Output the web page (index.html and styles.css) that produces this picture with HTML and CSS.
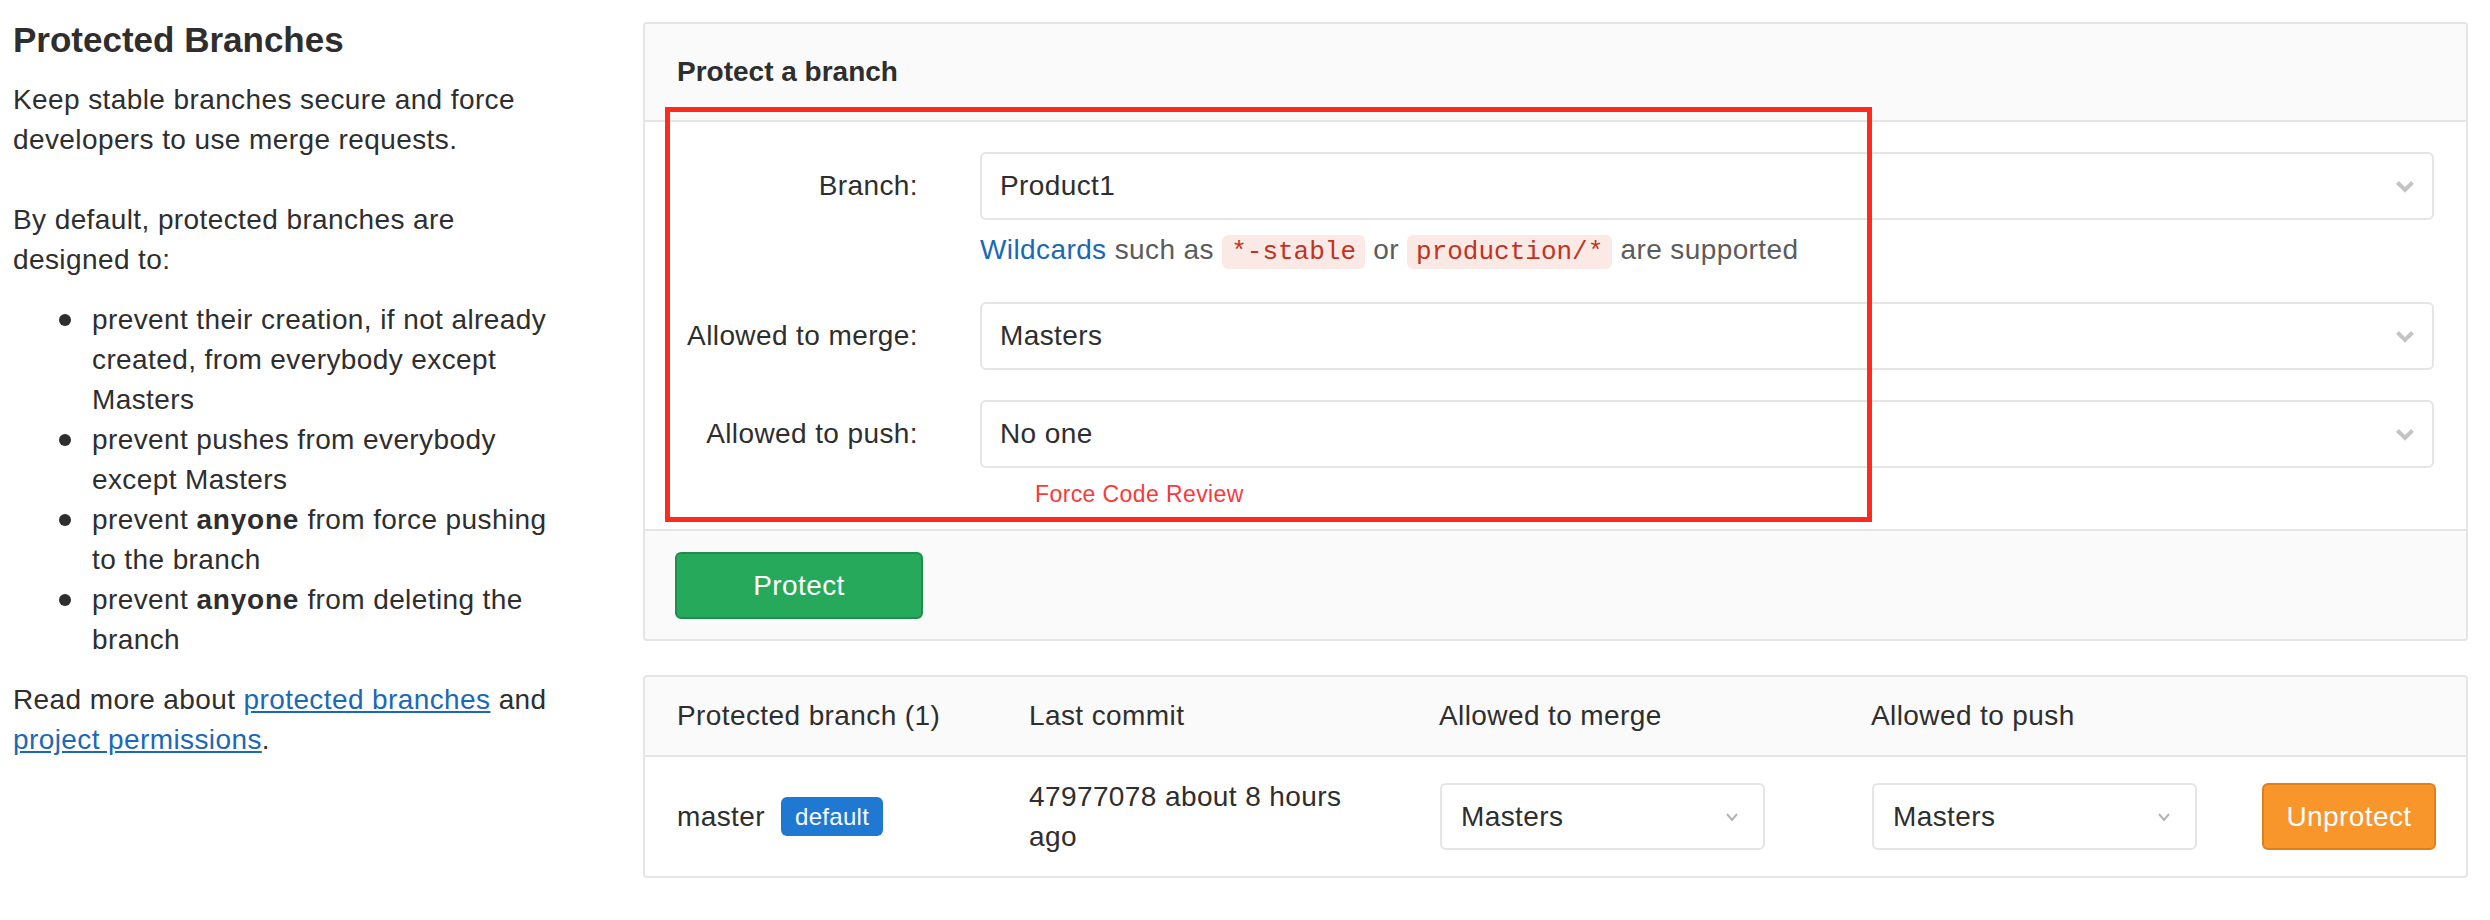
FILE: index.html
```html
<!DOCTYPE html>
<html lang="en">
<head>
<meta charset="utf-8">
<title>Protected Branches</title>
<link rel="stylesheet" href="styles.css">
</head>
<body>
<div class="page">
  <aside class="intro">
    <h4 class="intro-title">Protected Branches</h4>
    <p class="intro-lead">Keep stable branches secure and force developers to use merge requests.</p>
    <p class="intro-sub">By default, protected branches are designed to:</p>
    <ul class="intro-list">
      <li>prevent their creation, if not already created, from everybody except Masters</li>
      <li>prevent pushes from everybody except Masters</li>
      <li>prevent <strong>anyone</strong> from force pushing to the branch</li>
      <li>prevent <strong>anyone</strong> from deleting the branch</li>
    </ul>
    <p class="intro-more">Read more about <a class="link" href="#">protected branches</a> and <a class="link" href="#">project permissions</a>.</p>
  </aside>

  <main class="content">
    <section class="panel panel-protect">
      <div class="panel-heading">Protect a branch</div>
      <div class="panel-body">
        <div class="form-row">
          <label class="form-label">Branch:</label>
          <div class="form-field">
            <div class="select">
              <span>Product1</span>
              <svg class="chevron" width="20" height="13" viewBox="0 0 20 13"><path d="M2.5 2.5 L10 10 L17.5 2.5" fill="none" stroke="#c4c4c4" stroke-width="4"/></svg>
            </div>
            <div class="help"><a class="help-link" href="#">Wildcards</a> such as <code class="code">*-stable</code> or <code class="code">production/*</code> are supported</div>
          </div>
        </div>
        <div class="form-row">
          <label class="form-label">Allowed to merge:</label>
          <div class="form-field">
            <div class="select">
              <span>Masters</span>
              <svg class="chevron" width="20" height="13" viewBox="0 0 20 13"><path d="M2.5 2.5 L10 10 L17.5 2.5" fill="none" stroke="#c4c4c4" stroke-width="4"/></svg>
            </div>
          </div>
        </div>
        <div class="form-row">
          <label class="form-label">Allowed to push:</label>
          <div class="form-field">
            <div class="select">
              <span>No one</span>
              <svg class="chevron" width="20" height="13" viewBox="0 0 20 13"><path d="M2.5 2.5 L10 10 L17.5 2.5" fill="none" stroke="#c4c4c4" stroke-width="4"/></svg>
            </div>
            <div class="note">Force Code Review</div>
          </div>
        </div>
      </div>
      <div class="panel-footer">
        <button class="btn btn-create">Protect</button>
      </div>
      <div class="annotation"></div>
    </section>

    <section class="panel panel-table">
      <div class="tbl-row tbl-head">
        <div class="cell">Protected branch (1)</div>
        <div class="cell">Last commit</div>
        <div class="cell">Allowed to merge</div>
        <div class="cell">Allowed to push</div>
        <div class="cell"></div>
      </div>
      <div class="tbl-row tbl-body">
        <div class="cell cell-branch"><span>master</span><span class="badge">default</span></div>
        <div class="cell">47977078 about 8 hours ago</div>
        <div class="cell">
          <div class="select select-sm">
            <span>Masters</span>
            <svg class="chevron-sm" width="14" height="10" viewBox="0 0 14 10"><path d="M2 2 L7 8 L12 2" fill="none" stroke="#b5b5b5" stroke-width="2"/></svg>
          </div>
        </div>
        <div class="cell">
          <div class="select select-sm">
            <span>Masters</span>
            <svg class="chevron-sm" width="14" height="10" viewBox="0 0 14 10"><path d="M2 2 L7 8 L12 2" fill="none" stroke="#b5b5b5" stroke-width="2"/></svg>
          </div>
        </div>
        <div class="cell"><button class="btn btn-warning">Unprotect</button></div>
      </div>
    </section>
  </main>
</div>
</body>
</html>
```

FILE: styles.css
```css
* { box-sizing: border-box; }

html, body {
  margin: 0;
  padding: 0;
  background: #fff;
}

body {
  font-family: "Liberation Sans", Arial, sans-serif;
  font-size: 28px;
  line-height: 40px;
  letter-spacing: 0.4px;
  color: #2e2e2e;
  width: 2490px;
  height: 920px;
  overflow: hidden;
}

.page {
  display: flex;
  align-items: flex-start;
}

/* ---------- left column ---------- */
.intro {
  width: 566px;
  padding-left: 13px;
  flex: none;
}

.intro-title {
  margin: 20px 0 20px;
  font-size: 35px;
  line-height: 40px;
  font-weight: 700;
  letter-spacing: 0;
  color: #2e2e2e;
}

.intro-lead { margin: 0 0 40px; }
.intro-sub { margin: 0 0 20px; }

.intro-list {
  margin: 0 0 20px;
  padding-left: 79px;
  list-style: none;
}

.intro-list li {
  position: relative;
}

.intro-list li::before {
  content: "";
  position: absolute;
  left: -33px;
  top: 14px;
  width: 12px;
  height: 12px;
  border-radius: 50%;
  background: #2e2e2e;
}

.intro-list strong {
  font-weight: 700;
  letter-spacing: 0.8px;
}

.intro-more { margin: 0; }

.link {
  color: #1b69b6;
  text-decoration: underline;
}

/* ---------- right column ---------- */
.content {
  width: 1825px;
  margin-left: 77px;
  padding-top: 22px;
  flex: none;
}

.panel {
  position: relative;
  border: 2px solid #e5e5e5;
  border-radius: 4px;
  background: #fff;
}

.panel-heading {
  background: #fafafa;
  border-bottom: 2px solid #e5e5e5;
  padding: 28px 32px;
  font-weight: 700;
  letter-spacing: 0;
  border-radius: 4px 4px 0 0;
}

.panel-body {
  padding: 30px 32px 21px;
}

.form-row {
  display: grid;
  grid-template-columns: 241px 1fr;
  column-gap: 62px;
  margin-bottom: 30px;
}

.form-row:last-child { margin-bottom: 0; }

.form-label {
  text-align: right;
  line-height: 68px;
}

.select {
  height: 68px;
  border: 2px solid #e5e5e5;
  border-radius: 6px;
  background: #fff;
  padding: 0 17px 0 18px;
  display: flex;
  align-items: center;
  justify-content: space-between;
}

.chevron { display: block; }

.help {
  margin-top: 10px;
  color: #5c5c5c;
}

.help-link {
  color: #1b69b6;
  text-decoration: none;
}

.code {
  font-family: "Liberation Mono", "DejaVu Sans Mono", monospace;
  font-size: 26px;
  letter-spacing: 0;
  color: #c0341d;
  background: #fbe9e6;
  border-radius: 6px;
  padding: 2px 9px;
}

.note {
  margin-top: 12px;
  padding-left: 55px;
  font-size: 23px;
  line-height: 28px;
  color: #f93a3a;
}

.panel-footer {
  background: #fafafa;
  border-top: 2px solid #e5e5e5;
  padding: 21px 30px 20px;
  border-radius: 0 0 4px 4px;
}

.btn {
  font-family: "Liberation Sans", Arial, sans-serif;
  font-size: 28px;
  letter-spacing: 0.4px;
  color: #fff;
  height: 67px;
  border-radius: 6px;
  border: 2px solid transparent;
  padding: 0;
}

.btn-create {
  width: 248px;
  background: #27a95b;
  border-color: #1f8d4b;
}

.btn-warning {
  width: 174px;
  background: #f8952b;
  border-color: #e17f1b;
}

.annotation {
  position: absolute;
  left: 20px;
  top: 83px;
  width: 1207px;
  height: 415px;
  border: 5px solid #ff2a1f;
  pointer-events: none;
}

/* ---------- table panel ---------- */
.panel-table { margin-top: 34px; }

.tbl-row {
  display: grid;
  grid-template-columns: 352px 410px 432px 390px 1fr;
  align-items: center;
}

.tbl-head {
  background: #fafafa;
  border-bottom: 2px solid #e5e5e5;
  padding: 19px 0;
  border-radius: 4px 4px 0 0;
}

.tbl-body {
  height: 119px;
}

.cell {
  padding: 0 32px;
}

.tbl-body .cell:nth-child(3),
.tbl-body .cell:nth-child(4),
.tbl-body .cell:nth-child(5) {
  padding-left: 33px;
}

.cell-branch {
  display: flex;
  align-items: center;
  gap: 16px;
}

.badge {
  display: inline-block;
  height: 39px;
  line-height: 39px;
  padding: 0 14px;
  font-size: 24px;
  letter-spacing: 0.3px;
  color: #fff;
  background: #1f78d1;
  border-radius: 6px;
}

.select-sm {
  width: 325px;
  height: 67px;
  padding: 0 24px 0 19px;
}

.chevron-sm { display: block; }
```
